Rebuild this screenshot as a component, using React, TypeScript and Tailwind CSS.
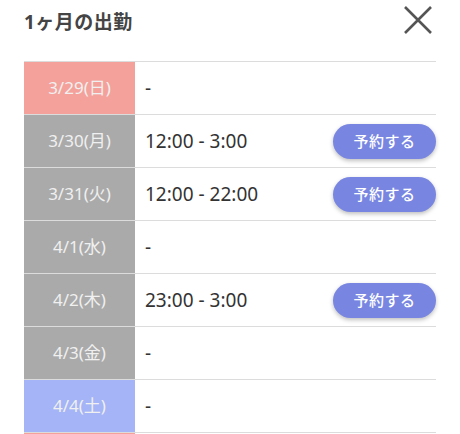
import React from "react";

type Row = { date: string; time: string; kind: "sun" | "sat" | "day"; reserve?: boolean };

const rows: Row[] = [
  { date: "3/29(日)", time: "-", kind: "sun" },
  { date: "3/30(月)", time: "12:00 - 3:00", kind: "day", reserve: true },
  { date: "3/31(火)", time: "12:00 - 22:00", kind: "day", reserve: true },
  { date: "4/1(水)", time: "-", kind: "day" },
  { date: "4/2(木)", time: "23:00 - 3:00", kind: "day", reserve: true },
  { date: "4/3(金)", time: "-", kind: "day" },
  { date: "4/4(土)", time: "-", kind: "sat" },
];

const bg = {
  sun: "bg-[#f5a19b]",
  sat: "bg-[#a4b4f6]",
  day: "bg-[#aaaaaa]",
};

export default function App() {
  return (
    <div
      className="w-[460px] h-[434px] overflow-hidden bg-white"
      style={{ fontFamily: '"Noto Sans", "Noto Sans CJK JP", sans-serif' }}
    >
      <div className="flex items-start justify-between h-[61px] pl-[24px] pr-[27px]">
        <div className="mt-[8px] text-[19px] font-bold text-[#444] tracking-[0.5px]">1ヶ月の出勤</div>
        <svg width="30" height="28" viewBox="0 0 30 28" className="mt-[6px]">
          <path d="M2 1 L28 27 M28 1 L2 27" stroke="#555" strokeWidth="2.6" fill="none" />
        </svg>
      </div>
      <div className="ml-[24px] w-[412px] border-t border-[#dcdcdc]">
        {rows.map((r) => (
          <div key={r.date} className="flex h-[53px] border-b border-[#dcdcdc]">
            <div
              className={`${bg[r.kind]} w-[111px] flex items-center justify-center text-[17px] text-[#f0f0f0]`}
            >
              {r.date}
            </div>
            <div className="flex-1 flex items-center justify-between pl-[10px]">
              <span className="text-[19px] text-[#333]">{r.time}</span>
              {r.reserve && (
                <button
                  className="w-[103px] h-[35px] rounded-full bg-[#7886e2] text-white text-[15px] font-medium shadow-[0_2px_4px_rgba(0,0,0,0.25)] tracking-[0.5px]"
                  style={{ fontFamily: '"Noto Sans CJK JP", sans-serif' }}
                >
                  予約する
                </button>
              )}
            </div>
          </div>
        ))}
        <div className="flex h-[10px]">
          <div className="bg-[#f5a19b] w-[111px]" />
        </div>
      </div>
    </div>
  );
}
